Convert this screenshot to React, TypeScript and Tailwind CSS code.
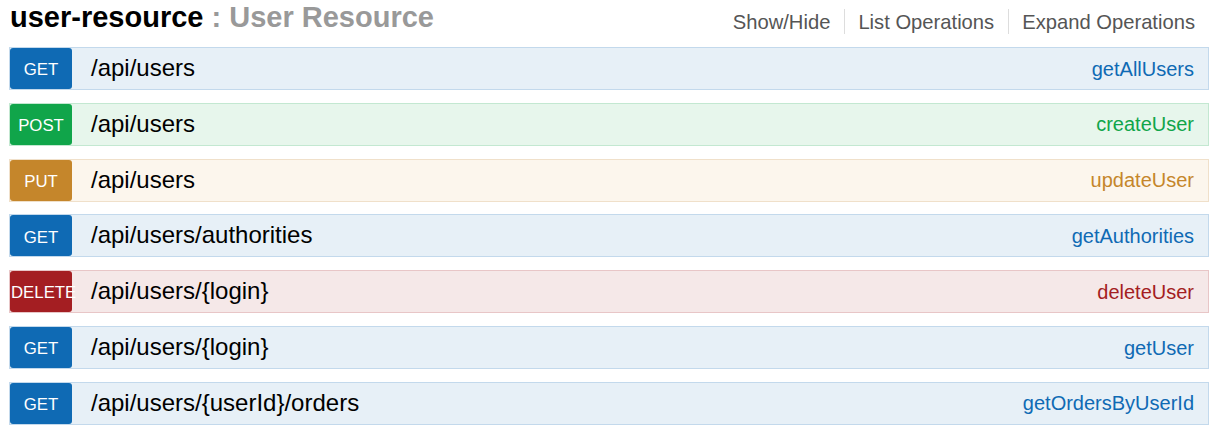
const methodStyles = {
  GET: {
    badge: "bg-[#0f6ab4]",
    bar: "bg-[#e7f0f7] border-[#c3d9ec]",
    op: "text-[#0f6ab4]",
  },
  POST: {
    badge: "bg-[#10a54a]",
    bar: "bg-[#e7f6ec] border-[#c3e8d1]",
    op: "text-[#10a54a]",
  },
  PUT: {
    badge: "bg-[#c5862b]",
    bar: "bg-[#fcf6ed] border-[#f0e0ca]",
    op: "text-[#c5862b]",
  },
  DELETE: {
    badge: "bg-[#a41e22]",
    bar: "bg-[#f5e8e8] border-[#e8c6c7]",
    op: "text-[#a41e22]",
  },
} as const;

type Method = keyof typeof methodStyles;

const operations: { method: Method; path: string; name: string }[] = [
  { method: "GET", path: "/api/users", name: "getAllUsers" },
  { method: "POST", path: "/api/users", name: "createUser" },
  { method: "PUT", path: "/api/users", name: "updateUser" },
  { method: "GET", path: "/api/users/authorities", name: "getAuthorities" },
  { method: "DELETE", path: "/api/users/{login}", name: "deleteUser" },
  { method: "GET", path: "/api/users/{login}", name: "getUser" },
  { method: "GET", path: "/api/users/{userId}/orders", name: "getOrdersByUserId" },
];

const headerLinks = ["Show/Hide", "List Operations", "Expand Operations"];

export default function App() {
  return (
    <div className="min-h-[435px] bg-white pl-[9px] pr-[8px] font-['Liberation_Sans',Arial,sans-serif]">
      <div className="flex h-[47px] items-start justify-between">
        <h2 className="mt-[3px] pl-[1px] text-[29px] leading-[29px] font-bold text-black">
          user-resource <span className="text-[#999]">: User Resource</span>
        </h2>
        <ul className="mt-[9px] flex">
          {headerLinks.map((link, i) => (
            <li
              key={link}
              className={
                i < headerLinks.length - 1
                  ? "flex h-[25px] items-center border-r border-[#ddd] pl-[13px] pr-[14px] text-[20.2px] leading-[20px] text-[#555]"
                  : "flex h-[25px] items-center pl-[13px] pr-[14px] text-[20.2px] leading-[20px] text-[#555]"
              }
            >
              <span className="pt-[1px]">{link}</span>
            </li>
          ))}
        </ul>
      </div>

      <ul className="flex flex-col gap-[12.83px]">
        {operations.map((operation) => {
          const style = methodStyles[operation.method];
          return (
            <li
              key={operation.method + operation.path}
              className={`flex h-[43px] items-center border ${style.bar}`}
            >
              <span
                className={`flex h-full w-[62px] shrink-0 items-center justify-center overflow-visible whitespace-nowrap rounded-[3px] pt-[4px] text-[16.8px] leading-none text-white ${style.badge}`}
              >
                <span className={operation.method === "DELETE" ? "w-[62px] pl-[1px] text-left" : ""}>
                  {operation.method}
                </span>
              </span>
              <span className="ml-[19px] pb-[1px] text-[24px] leading-none text-black">
                {operation.path}
              </span>
              <span className={`ml-auto pr-[14px] text-[20px] leading-none ${style.op}`}>
                {operation.name}
              </span>
            </li>
          );
        })}
      </ul>
    </div>
  );
}
